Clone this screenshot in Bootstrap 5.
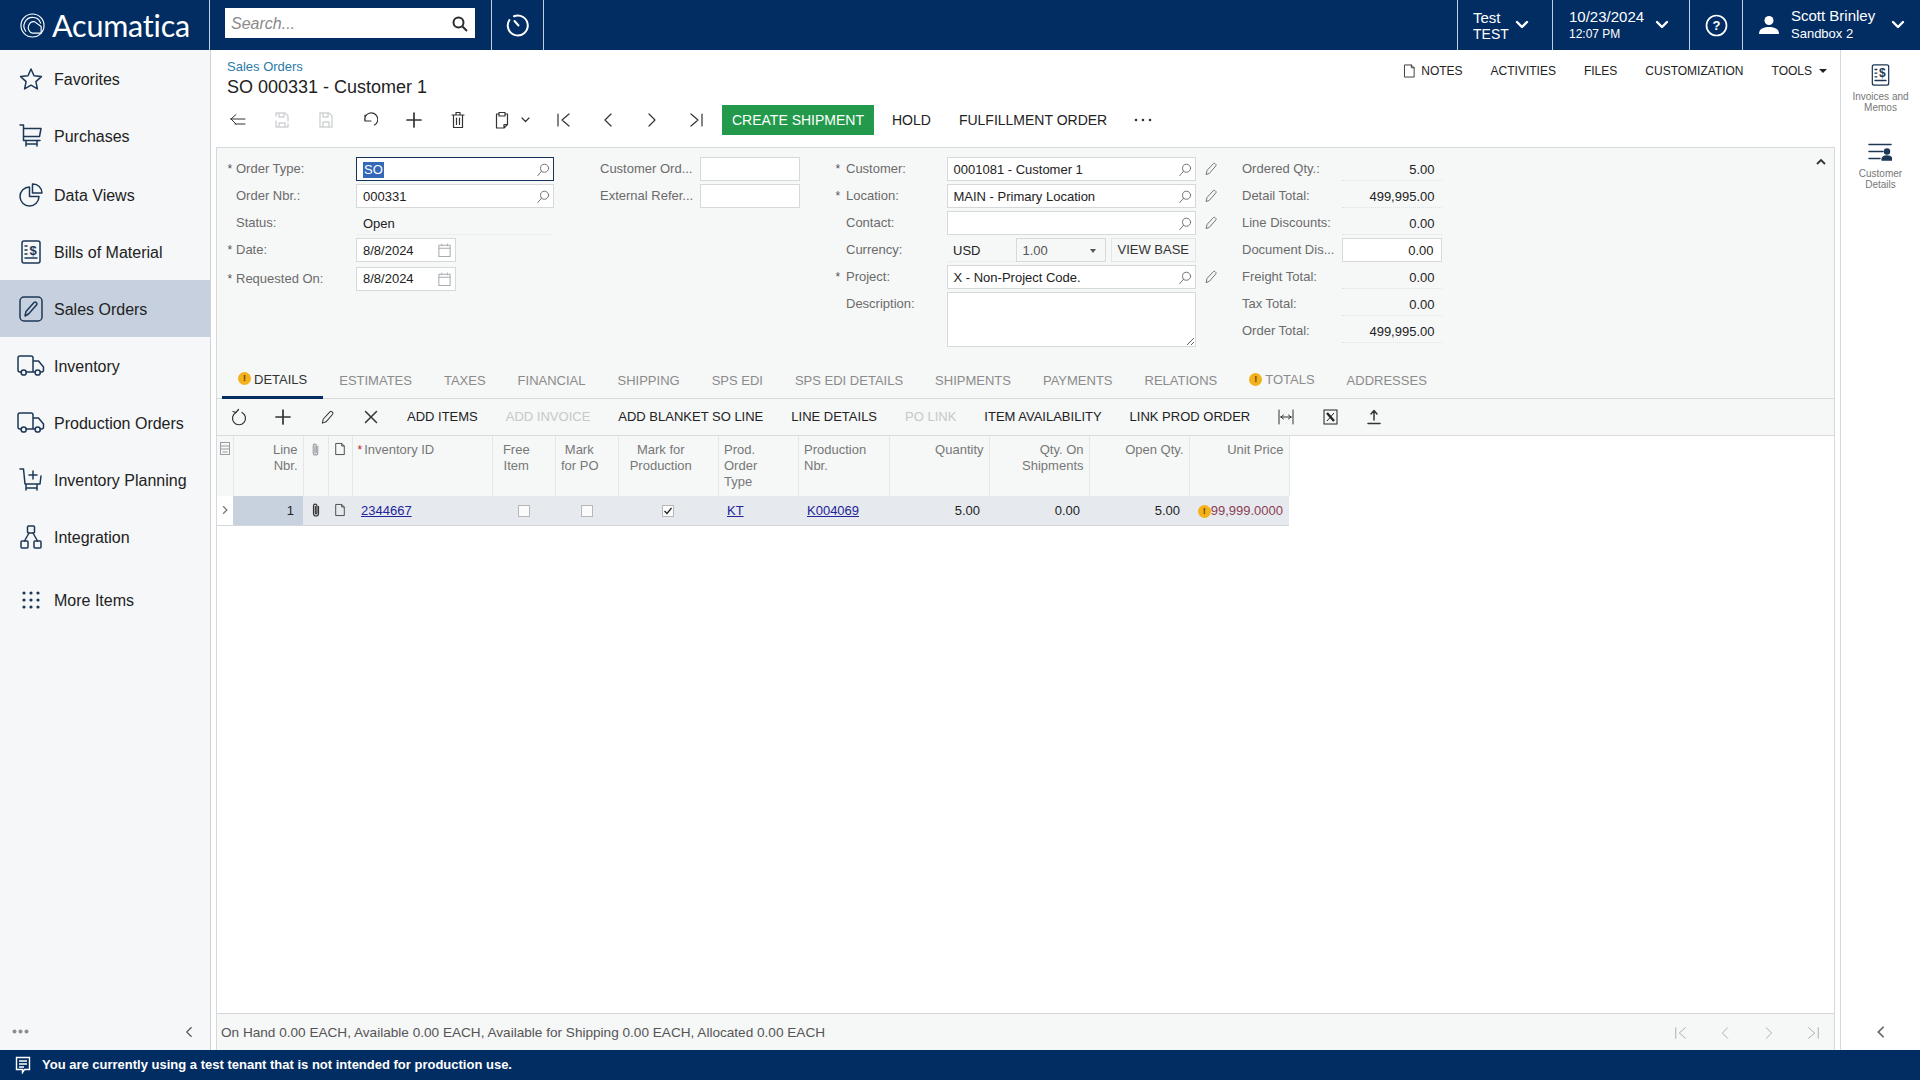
<!DOCTYPE html>
<html lang="en">
<head>
<meta charset="utf-8">
<title>Acumatica - Sales Orders</title>
<link href="https://cdn.jsdelivr.net/npm/bootstrap@5.3.0/dist/css/bootstrap.min.css" rel="stylesheet">
<style>
:root{--navy:#022d63;--ink:#1d3856;--line:#d6d9dc;--pane:#f6f7f7;}
html,body{height:100%;}
body{font-family:"Liberation Sans",Arial,sans-serif;font-size:13px;color:#222;overflow:hidden;background:#fff;display:flex;flex-direction:column;height:1080px;}
svg{display:block;flex:none;}
.ico{fill:none;stroke:var(--ink);stroke-width:1.5;stroke-linecap:round;stroke-linejoin:round;}
.ico-w{fill:none;stroke:#fff;stroke-width:2;stroke-linecap:round;stroke-linejoin:round;}
.ico-g{fill:none;stroke:#6f6f6f;stroke-width:1.1;stroke-linecap:round;stroke-linejoin:round;}
.ico-l{fill:none;stroke:#a8acb0;stroke-width:1.1;stroke-linecap:round;stroke-linejoin:round;}
.ico-d{fill:none;stroke:#333;stroke-width:1.2;stroke-linecap:round;stroke-linejoin:round;}
.ico-x{fill:none;stroke:#cfd2d4;stroke-width:1.4;stroke-linecap:round;stroke-linejoin:round;}
/* top bar */
.topbar{height:50px;background:var(--navy);color:#fff;flex:none;}
.tb-sec{height:50px;display:flex;align-items:center;border-left:1px solid #c3cedd;}
.tb-logo{width:210px;padding-left:20px;gap:7px;border-left:0;border-right:1px solid #c3cedd;}
.logo-text{font-family:Lato,"Liberation Sans",sans-serif;font-size:30.5px;line-height:1;letter-spacing:-.2px;padding-top:1px;}
.tb-search{width:281px;padding-left:15px;border-left:0;}
.search-box{width:250px;height:30px;margin-bottom:4px;background:#fff;display:flex;align-items:center;justify-content:space-between;padding:1px 6px 0;border-radius:0;}
.search-box span{font-size:16px;font-style:italic;color:#8a8a8a;}
.tb-hist{width:53px;justify-content:center;border-right:1px solid #c3cedd;}
.tb-test{width:95px;padding-left:15px;}
.tb-date{width:137px;padding-left:16px;}
.tb-help{width:53px;justify-content:center;}
.tb-user{width:178px;padding-left:16px;}
.tb-two{line-height:1;}
.big14{font-size:14px;}
.big15{font-size:15px;}
.sm12{font-size:12px;}
.sm13{font-size:13px;}
/* shell */
.shell{flex:1 1 auto;min-height:0;display:flex;}
.sidebar{width:211px;flex:none;background:#f5f7f8;border-right:1px solid #cfd3d7;display:flex;flex-direction:column;}
.side-link{height:57px;display:flex;align-items:center;padding:2px 0 0 16px;font-size:16px;color:#222;text-decoration:none;}
.side-link:hover{color:#222;}
.side-link.current{background:#c6d0de;}
.side-ic{width:30px;margin-right:8px;display:flex;justify-content:center;margin-top:-1px;}
.drop2{margin-top:2px;}
.drop6{margin-top:6px;}
.side-foot{height:37px;margin-top:auto;display:flex;align-items:center;justify-content:space-between;padding:0 15px 0 12px;}
.work{flex:1 1 auto;min-width:0;padding-left:5px;display:flex;flex-direction:column;}
.page-head{height:97px;flex:none;padding-left:11px;padding-right:8px;position:relative;}
.head-row{height:50px;display:flex;justify-content:space-between;}
.crumb{color:#2b7aa6;text-decoration:none;line-height:16px;display:block;padding-top:9px;}
.page-title{font-size:18px;line-height:22px;margin:1px 0 0;font-weight:400;color:#222;}
.doc-nav{display:flex;gap:28px;font-size:12px;height:42px;align-items:center;color:#222;}
.doc-nav span{white-space:nowrap;}
.caret-d{display:inline-block;width:0;height:0;border-left:4px solid transparent;border-right:4px solid transparent;border-top:4px solid #222;margin-left:7px;vertical-align:2px;}
.tool-row{display:flex;align-items:center;height:30px;margin:5px 0 0 -11px;}
.tbtn{width:44px;height:30px;display:flex;align-items:center;justify-content:center;padding:0;border:0;background:transparent;border-radius:0;}
.tbtn.wide{width:62px;gap:12px;justify-content:flex-start;padding-left:15px;}
.txtbtn{height:30px;padding:0 14px;border:0;border-radius:0;background:transparent;font-size:13px;color:#222;white-space:nowrap;display:flex;align-items:center;}
.tool-row .txtbtn{font-size:14px;}
.txtbtn.off{color:#c6c8ca;}
.btn.go-green,.btn.go-green:hover{background:#239a4b;color:#fff;width:152px;justify-content:center;padding:0;margin:0 4px;}
/* panel */
.panel{flex:1 1 auto;min-height:0;border:1px solid var(--line);border-bottom:0;display:flex;flex-direction:column;background:#fff;}
.form-area{height:214px;flex:none;background:var(--pane);display:flex;padding:9px 7px 0 12px;}
.fcol{display:grid;grid-auto-rows:24px;row-gap:3px;align-items:center;}
.c1{grid-template-columns:127px 198px;}
.c2{grid-template-columns:100px 100px;margin-left:46px;}
.c3{grid-template-columns:109.5px 249px 46.5px;grid-template-rows:repeat(5,24px) 55px;margin-left:37px;}
.c4{grid-template-columns:100px 99.5px;}
.flab{color:#6b6b6b;white-space:nowrap;overflow:hidden;height:24px;line-height:24px;}
.req{display:inline-block;width:8.5px;margin-left:-1.5px;color:#555;font-size:12px;}
.c3 .req{width:10.5px;}
.c1 .flab,.c3 .flab{overflow:visible;}
.form-control.fld{height:24px;border:1px solid var(--line);border-radius:0;background:#fff;padding:1px 3px 0 6px;font-size:13px;line-height:22px;color:#222;display:flex;align-items:center;justify-content:space-between;box-shadow:none;}
.form-control.fld.focused{border-color:#15325a;border-width:1.5px;}
.sel-text{background:#3469b8;color:#fff;padding:0 1px;line-height:16px;}
.form-control.fld.date-w{width:99.5px;}
.shift2{margin-top:3px;}
.plainv{padding-left:7px;border-bottom:1px solid #eceeef;height:24px;line-height:25px;}
.sumv{text-align:right;padding-right:7px;border-bottom:1px dotted #dfe2e4;height:24px;line-height:25px;}
.form-control.fld.sumin{justify-content:flex-end;padding-right:7px;}
.cur-row{display:flex;height:24px;}
.cur-code{width:69px;padding-left:6.5px;line-height:25px;border-bottom:1px solid #eceeef;}
.form-control.fld.cur-sel{width:90.5px;color:#555;background:var(--pane);flex:none;}
.tri{width:0;height:0;border-left:3.5px solid transparent;border-right:3.5px solid transparent;border-top:4px solid #555;margin-right:6px;}
.btn.viewbase{width:84.5px;height:24px;margin-left:5px;padding:0;border:1px solid #e3e5e6;border-radius:0;background:var(--pane);font-size:13px;color:#333;flex:none;}
textarea.form-control.fld{height:55px;display:block;resize:both;}
.pen{padding-left:8px;}
.fold{margin-left:auto;padding-top:1px;align-self:flex-start;}
/* tabs */
.tab-strip{height:37px;flex:none;background:var(--pane);border-bottom:1px solid #d8dadc;padding-left:5px;flex-wrap:nowrap;}
.tab-strip .nav-link{height:37px;padding:0 16px;margin:0;color:#8b8b8b;font-size:13px;line-height:36px;white-space:nowrap;display:flex;align-items:center;border:0;border-radius:0;}
.tab-strip .nav-link.active{color:#333;border-bottom:3px solid var(--navy);background:transparent;margin-bottom:-1px;height:37px;padding-top:1px;}
.warn-dot{width:13px;height:13px;border-radius:50%;background:#f3b11b;color:#6b3a00;font-size:9px;line-height:13px;text-align:center;font-weight:700;display:inline-block;flex:none;}
.tab-strip .warn-dot{margin-right:3px;margin-top:-3px;}
.up3{position:relative;top:-1px;}
.grid-tools{height:37px;flex:none;background:var(--pane);border-bottom:1px solid #d8dadc;display:flex;align-items:center;}
.grid-tools .tbtn,.grid-tools .txtbtn{height:36px;}
/* grid */
.grid-wrap{flex:1 1 auto;min-height:0;background:#fff;}
.table.sogrid{width:1072px;table-layout:fixed;margin:0;font-size:13px;--bs-table-bg:transparent;}
.sogrid thead th{height:60px;padding:6px 5px 0 5.5px;background:var(--pane);color:#777;font-weight:400;line-height:16px;vertical-align:top;border:0;border-right:1px solid #e4e6e8;}
.sogrid tbody td{height:29px;padding:1px 9px 0;background:#e6eaee;color:#222;border:0;border-bottom:1px solid #d3d7da;vertical-align:middle;}
.sogrid thead th.ctr{text-align:center;padding-right:20px;}
.sogrid th.rgt,.sogrid td.rgt{text-align:right;}
.sogrid tbody td.keycell{background:#c8d2de;}
.sogrid tbody td.ctrd{text-align:center;padding:0;}
.sogrid tbody td.tight{padding:1px 6px 0 2px;}
.sogrid tbody td.icn{padding:0;}
.sogrid thead th.icn{padding:6px 0 0;}
.sogrid a{color:#23239a;}
.star-red{color:#b23;font-size:12px;margin-right:2px;}
.chk{display:inline-block;width:12px;height:12px;border:1px solid #b4b8bb;background:#fbfbfb;vertical-align:-2px;}
.price{color:#8b3d52;}
.grid-foot{height:37px;flex:none;background:var(--pane);border-top:1px solid #d4d7da;display:flex;align-items:center;padding-left:4px;padding-top:2px;color:#555;font-size:13.6px;}
.pager{margin-left:auto;margin-right:-1px;display:flex;}
/* right rail */
.rail{width:80px;flex:none;margin-left:5px;border-left:1px solid var(--line);display:flex;flex-direction:column;align-items:center;background:#fff;}
.rail-item{text-align:center;font-size:10px;line-height:11px;color:#777;padding-top:14px;}
.rail-one{height:79px;}
.rail-one svg{margin:0 auto 5px;}
.rail-two svg{margin:0 auto 7px;}
.rail-foot{margin-top:auto;height:37px;display:flex;align-items:center;}
.statusbar{height:30px;flex:none;background:var(--navy);color:#fff;display:flex;align-items:center;padding-left:15px;font-weight:700;font-size:13px;gap:11px;}
</style>
</head>
<body>
<svg width="0" height="0" style="position:absolute">
  <defs>
    <symbol id="look" viewBox="0 0 16 16"><circle cx="9.800" cy="6" r="4.600"/><path d="M6.400 9.400 2 14.400"/></symbol>
    <symbol id="pen" viewBox="0 0 16 16"><path d="M2.500 14 3.500 9.600 10.800 1.800c.6-.5 1.200-.5 1.800 0l.9.9c.5.6.5 1.200 0 1.800L6.400 12.600z"/></symbol>
    <symbol id="cal" viewBox="0 0 16 16"><rect x="2" y="2.500" width="12" height="12"/><path d="M2 5.500h12M5 1v2M11 1v2"/></symbol>
    <symbol id="bill" viewBox="0 0 20 24"><rect x="1" y="1" width="18" height="22" rx="2"/><path d="M4 6h2M4 10h2M4 14h2M4 18h12"/><text x="12" y="14.500" text-anchor="middle" font-family="Liberation Sans" font-size="13" font-weight="700" fill="#1d3856" stroke="none">$</text></symbol>
    <symbol id="truck" viewBox="0 0 28 22"><path d="M4.500 17H3a2 2 0 0 1-2-2V3a2 2 0 0 1 2-2h11a2 2 0 0 1 2 2v14H9M16 6h5.500l5 6v3a2 2 0 0 1-2 2h-1.500M18 17h-2"/><circle cx="6.700" cy="17.500" r="2.600"/><circle cx="20.700" cy="17.500" r="2.600"/></symbol>
    <symbol id="first" viewBox="0 0 16 16"><path d="M2 2v12M13 2 6 8l7 6"/></symbol>
    <symbol id="prev" viewBox="0 0 16 16"><path d="M11 2 5 8l6 6"/></symbol>
    <symbol id="next" viewBox="0 0 16 16"><path d="M5 2l6 6-6 6"/></symbol>
    <symbol id="last" viewBox="0 0 16 16"><path d="M14 2v12M3 2l7 6-7 6"/></symbol>
    <symbol id="clip" viewBox="0 0 12 16"><path d="M8.500 4v7.500a2.500 2.500 0 0 1-5 0V3.800a1.700 1.700 0 0 1 3.400 0v7.200a.8.8 0 0 1-1.600 0V4"/></symbol>
    <symbol id="note" viewBox="0 0 14 16"><path d="M2 1.500h7l3 3v10H2zM9 1.500v3h3"/></symbol>
  </defs>
</svg>

<header class="topbar d-flex">
  <div class="tb-sec tb-logo">
    <svg width="25" height="25" viewBox="0 0 26 26" class="ico-w" style="stroke-width:1.200"><circle cx="13" cy="13" r="12"/><path d="M6 19A9 9 0 0 1 13 4.500a9 9 0 0 1 8.500 6"/><path d="M9 13a6 6 0 0 1 6-4l7 5v7H13a6 6 0 0 1-4-8z"/></svg>
    <span class="logo-text">Acumatica</span>
  </div>
  <div class="tb-sec tb-search">
    <div class="search-box"><span>Search...</span>
      <svg width="18" height="18" viewBox="0 0 18 18" fill="none" stroke="#2a2a2a" stroke-width="2"><circle cx="7.500" cy="7.500" r="5"/><path d="M11.500 11.500 16 16"/></svg>
    </div>
  </div>
  <div class="tb-sec tb-hist">
    <svg width="24" height="24" viewBox="0 0 24 24" class="ico-w"><path d="M8 3.200A10 10 0 1 1 3.400 7"/><path d="M8.500 8 12.500 12.500"/></svg>
  </div>
  <div class="flex-grow-1"></div>
  <div class="tb-sec tb-test">
    <div class="tb-two" style="width:42px"><div class="big15" style="margin-bottom:2px">Test</div><div class="big14">TEST</div></div>
    <svg width="14" height="10" viewBox="0 0 14 10" class="ico-w" style="stroke-width:2.400"><path d="M2 2l5 5 5-5"/></svg>
  </div>
  <div class="tb-sec tb-date">
    <div class="tb-two" style="width:86px;padding-bottom:2px"><div class="big15" style="margin-bottom:4px">10/23/2024</div><div class="sm12">12:07 PM</div></div>
    <svg width="14" height="10" viewBox="0 0 14 10" class="ico-w" style="stroke-width:2.400"><path d="M2 2l5 5 5-5"/></svg>
  </div>
  <div class="tb-sec tb-help">
    <svg width="23" height="23" viewBox="0 0 23 23" class="ico-w" style="stroke-width:1.700"><circle cx="11.500" cy="11.500" r="10"/><text x="11.500" y="16" text-anchor="middle" font-family="Liberation Sans" font-size="13" font-weight="700" fill="#fff" stroke="none">?</text></svg>
  </div>
  <div class="tb-sec tb-user">
    <svg width="20" height="20" viewBox="0 0 20 20" fill="#fff"><circle cx="10" cy="5.500" r="4.500"/><path d="M0 19c0-5 4-7 10-7s10 2 10 7z"/></svg>
    <div class="tb-two" style="width:100px;margin-left:12px;padding-bottom:3px"><div class="big15" style="margin-bottom:4px">Scott Brinley</div><div class="sm13">Sandbox 2</div></div>
    <svg width="14" height="10" viewBox="0 0 14 10" class="ico-w" style="stroke-width:2.400"><path d="M2 2l5 5 5-5"/></svg>
  </div>
</header>

<div class="shell">
  <nav class="sidebar">
    <a class="side-link" href="#"><span class="side-ic"><svg width="24" height="24" viewBox="0 0 24 24" class="ico"><path d="M12 2l3 6.800 7.400.8-5.500 5 1.500 7.300L12 18.200l-6.400 3.700 1.500-7.300-5.500-5 7.400-.8z"/></svg></span>Favorites</a>
    <a class="side-link" href="#"><span class="side-ic"><svg width="24" height="24" viewBox="0 0 24 24" class="ico"><path d="M1 1h3.500v15.500H21M4.500 4.500H22l-1.500 8H4.500"/><path d="M7 16.500V22M18 16.500V22M7 20h11"/></svg></span>Purchases</a>
    <a class="side-link drop2" href="#"><span class="side-ic"><svg width="24" height="24" viewBox="0 0 24 24" class="ico"><path d="M10.500 4A9.500 9.500 0 1 0 20 13.500H10.500z"/><path d="M13.500 1A9 9 0 0 1 23 10h-9.500z"/></svg></span>Data Views</a>
    <a class="side-link" href="#"><span class="side-ic"><svg width="20" height="24" viewBox="0 0 20 24" class="ico"><use href="#bill"/></svg></span>Bills of Material</a>
    <a class="side-link current" href="#"><span class="side-ic"><svg width="24" height="26" viewBox="0 0 24 26" class="ico"><rect x="1" y="1" width="22" height="24" rx="4"/><path d="M6 20l1-4.500 8-9c.8-.7 1.500-.7 2.200 0l.3.300c.7.700.7 1.400 0 2.200l-8 9z"/></svg></span>Sales Orders</a>
    <a class="side-link" href="#"><span class="side-ic"><svg width="28" height="22" viewBox="0 0 28 22" class="ico"><use href="#truck"/></svg></span>Inventory</a>
    <a class="side-link" href="#"><span class="side-ic"><svg width="28" height="22" viewBox="0 0 28 22" class="ico"><use href="#truck"/></svg></span>Production Orders</a>
    <a class="side-link" href="#"><span class="side-ic"><svg width="24" height="24" viewBox="0 0 24 24" class="ico"><path d="M1 1h3.500l1.500 15H21l1-8M7 16v6M18 16v6M7 20h11M14 3v8M10 7h8"/></svg></span>Inventory Planning</a>
    <a class="side-link" href="#"><span class="side-ic"><svg width="24" height="24" viewBox="0 0 24 24" class="ico"><rect x="8.500" y="1" width="7" height="7" rx="1"/><rect x="2" y="16" width="7" height="7" rx="1"/><rect x="15" y="16" width="7" height="7" rx="1"/><path d="M10 8l-4.500 8M14 8l4.500 8"/></svg></span>Integration</a>
    <a class="side-link drop6" href="#"><span class="side-ic"><svg width="20" height="20" viewBox="0 0 20 20" fill="#1d3856"><circle cx="3" cy="3" r="1.600"/><circle cx="10" cy="3" r="1.600"/><circle cx="17" cy="3" r="1.600"/><circle cx="3" cy="10" r="1.600"/><circle cx="10" cy="10" r="1.600"/><circle cx="17" cy="10" r="1.600"/><circle cx="3" cy="17" r="1.600"/><circle cx="10" cy="17" r="1.600"/><circle cx="17" cy="17" r="1.600"/></svg></span>More Items</a>
    <div class="side-foot">
      <svg width="17" height="5" viewBox="0 0 17 5" fill="#8a8f94"><circle cx="2.500" cy="2.500" r="2"/><circle cx="8.500" cy="2.500" r="2"/><circle cx="14.500" cy="2.500" r="2"/></svg>
      <svg width="12" height="16" viewBox="0 0 16 16" class="ico-d" style="stroke:#555;stroke-width:1.500"><use href="#prev"/></svg>
    </div>
  </nav>

  <main class="work">
    <div class="page-head">
      <div class="head-row">
        <div>
          <a class="crumb" href="#">Sales Orders</a>
          <h1 class="page-title">SO 000331 - Customer 1</h1>
        </div>
        <div class="doc-nav">
          <span class="d-flex align-items-center" style="gap:5px"><svg width="13" height="16" viewBox="0 0 14 16" class="ico-d" style="stroke-width:1"><use href="#note"/></svg>NOTES</span>
          <span>ACTIVITIES</span><span>FILES</span><span>CUSTOMIZATION</span>
          <span>TOOLS<i class="caret-d"></i></span>
        </div>
      </div>
      <div class="tool-row">
        <button class="tbtn" aria-label="Back"><svg width="16" height="16" viewBox="0 0 16 16" class="ico-d"><path d="M1 7h14M1 7l5-4.500M1 7l5 5M5 12h10" style="stroke-width:1"/></svg></button>
        <button class="tbtn" aria-label="Save and close"><svg width="16" height="18" viewBox="0 0 16 18" class="ico-x"><path d="M2 5V2h9l3 3v5M2 10v6h12v-3M5 2v4h5V2M5 16v-4h6v4"/></svg></button>
        <button class="tbtn" aria-label="Save"><svg width="16" height="18" viewBox="0 0 16 18" class="ico-x"><path d="M2 2h9l3 3v11H2zM5 2v4h5V2M5 16v-5h6v5"/></svg></button>
        <button class="tbtn" aria-label="Undo"><svg width="16" height="16" viewBox="0 0 16 16" class="ico-d"><path d="M3 3v6h6M3 9a6.500 6.500 0 1 1 9.500 4"/></svg></button>
        <button class="tbtn" aria-label="Add"><svg width="16" height="16" viewBox="0 0 16 16" class="ico-d" style="stroke-width:1.700"><path d="M8 1v14M1 8h14"/></svg></button>
        <button class="tbtn" aria-label="Delete"><svg width="14" height="18" viewBox="0 0 14 18" class="ico-d"><path d="M1 4h12M5 4V1.500h4V4M2.500 4v12.500h9V4M5.500 7v6.500M8.500 7v6.500"/></svg></button>
        <button class="tbtn wide" aria-label="Paste"><svg width="14" height="18" viewBox="0 0 14 18" class="ico-d"><path d="M4 3H1.500v14H9l3.500-3.500V3H10M4 1.500h6V5H4zM9 17v-3.500h3.500"/></svg><svg width="9" height="6" viewBox="0 0 9 6" class="ico-d"><path d="M1 1l3.500 3.500L8 1"/></svg></button>
        <button class="tbtn" aria-label="First"><svg width="16" height="16" class="ico-d"><use href="#first"/></svg></button>
        <button class="tbtn" aria-label="Previous"><svg width="16" height="16" class="ico-d"><use href="#prev"/></svg></button>
        <button class="tbtn" aria-label="Next"><svg width="16" height="16" class="ico-d"><use href="#next"/></svg></button>
        <button class="tbtn" aria-label="Last"><svg width="16" height="16" class="ico-d"><use href="#last"/></svg></button>
        <button class="btn txtbtn go-green">CREATE SHIPMENT</button>
        <button class="btn txtbtn">HOLD</button>
        <button class="btn txtbtn">FULFILLMENT ORDER</button>
        <button class="tbtn" aria-label="More"><svg width="18" height="4" viewBox="0 0 18 4" fill="#333"><circle cx="2" cy="2" r="1.300"/><circle cx="9" cy="2" r="1.300"/><circle cx="16" cy="2" r="1.300"/></svg></button>
      </div>
    </div>

    <section class="panel">
      <div class="form-area">
        <div class="fcol c1">
          <div class="flab"><span class="req">*</span>Order Type:</div>
          <div class="form-control fld focused"><span class="sel-text">SO</span><svg width="14" height="14" class="ico-g"><use href="#look"/></svg></div>
          <div class="flab"><span class="req"></span>Order Nbr.:</div>
          <div class="form-control fld"><span>000331</span><svg width="14" height="14" class="ico-g"><use href="#look"/></svg></div>
          <div class="flab"><span class="req"></span>Status:</div>
          <div class="plainv">Open</div>
          <div class="flab"><span class="req">*</span>Date:</div>
          <div class="form-control fld date-w"><span>8/8/2024</span><svg width="15" height="15" class="ico-l"><use href="#cal"/></svg></div>
          <div class="flab shift2"><span class="req">*</span>Requested On:</div>
          <div class="form-control fld date-w shift2"><span>8/8/2024</span><svg width="15" height="15" class="ico-l"><use href="#cal"/></svg></div>
        </div>
        <div class="fcol c2">
          <div class="flab">Customer Ord...</div><div class="form-control fld"></div>
          <div class="flab">External Refer...</div><div class="form-control fld"></div>
        </div>
        <div class="fcol c3">
          <div class="flab"><span class="req">*</span>Customer:</div>
          <div class="form-control fld"><span>0001081 - Customer 1</span><svg width="14" height="14" class="ico-g"><use href="#look"/></svg></div>
          <div class="pen"><svg width="14" height="14" class="ico-g"><use href="#pen"/></svg></div>
          <div class="flab"><span class="req">*</span>Location:</div>
          <div class="form-control fld"><span>MAIN - Primary Location</span><svg width="14" height="14" class="ico-g"><use href="#look"/></svg></div>
          <div class="pen"><svg width="14" height="14" class="ico-g"><use href="#pen"/></svg></div>
          <div class="flab"><span class="req"></span>Contact:</div>
          <div class="form-control fld"><span></span><svg width="14" height="14" class="ico-g"><use href="#look"/></svg></div>
          <div class="pen"><svg width="14" height="14" class="ico-g"><use href="#pen"/></svg></div>
          <div class="flab"><span class="req"></span>Currency:</div>
          <div class="cur-row"><div class="cur-code">USD</div><div class="form-control fld cur-sel"><span>1.00</span><i class="tri"></i></div><button class="btn viewbase">VIEW BASE</button></div>
          <div></div>
          <div class="flab"><span class="req">*</span>Project:</div>
          <div class="form-control fld"><span>X - Non-Project Code.</span><svg width="14" height="14" class="ico-g"><use href="#look"/></svg></div>
          <div class="pen"><svg width="14" height="14" class="ico-g"><use href="#pen"/></svg></div>
          <div class="flab align-self-start"><span class="req"></span>Description:</div>
          <textarea class="form-control fld" aria-label="Description"></textarea>
          <div></div>
        </div>
        <div class="fcol c4">
          <div class="flab">Ordered Qty.:</div><div class="sumv">5.00</div>
          <div class="flab">Detail Total:</div><div class="sumv">499,995.00</div>
          <div class="flab">Line Discounts:</div><div class="sumv">0.00</div>
          <div class="flab">Document Dis...</div><div class="form-control fld sumin">0.00</div>
          <div class="flab">Freight Total:</div><div class="sumv">0.00</div>
          <div class="flab">Tax Total:</div><div class="sumv">0.00</div>
          <div class="flab">Order Total:</div><div class="sumv">499,995.00</div>
        </div>
        <div class="fold"><svg width="12" height="8" viewBox="0 0 12 8" fill="none" stroke="#333" stroke-width="1.800"><path d="M2 6l4-4 4 4"/></svg></div>
      </div>

      <ul class="nav tab-strip">
        <li class="nav-item"><a class="nav-link active" href="#"><i class="warn-dot fst-normal">!</i><span>DETAILS</span></a></li>
        <li class="nav-item"><a class="nav-link" href="#">ESTIMATES</a></li>
        <li class="nav-item"><a class="nav-link" href="#">TAXES</a></li>
        <li class="nav-item"><a class="nav-link" href="#">FINANCIAL</a></li>
        <li class="nav-item"><a class="nav-link" href="#">SHIPPING</a></li>
        <li class="nav-item"><a class="nav-link" href="#">SPS EDI</a></li>
        <li class="nav-item"><a class="nav-link" href="#">SPS EDI DETAILS</a></li>
        <li class="nav-item"><a class="nav-link" href="#">SHIPMENTS</a></li>
        <li class="nav-item"><a class="nav-link" href="#">PAYMENTS</a></li>
        <li class="nav-item"><a class="nav-link" href="#">RELATIONS</a></li>
        <li class="nav-item"><a class="nav-link" href="#"><i class="warn-dot fst-normal">!</i><span class="up3">TOTALS</span></a></li>
        <li class="nav-item"><a class="nav-link" href="#">ADDRESSES</a></li>
      </ul>

      <div class="grid-tools">
        <button class="tbtn" aria-label="Refresh"><svg width="16" height="18" viewBox="0 0 16 18" class="ico-d"><path d="M5 4.500a6.500 6.500 0 1 0 6 0M7.500 1.500 5 4.500l-3-1"/></svg></button>
        <button class="tbtn" aria-label="Add row"><svg width="16" height="16" viewBox="0 0 16 16" class="ico-d" style="stroke-width:1.700"><path d="M8 1v14M1 8h14"/></svg></button>
        <button class="tbtn" aria-label="Edit"><svg width="15" height="15" class="ico-d" viewBox="0 0 16 16" style="stroke-width:1.100"><use href="#pen"/></svg></button>
        <button class="tbtn" aria-label="Delete row"><svg width="14" height="14" viewBox="0 0 14 14" class="ico-d" style="stroke-width:1.500"><path d="M1.500 1.500l11 11M12.500 1.500l-11 11"/></svg></button>
        <button class="btn txtbtn">ADD ITEMS</button>
        <button class="btn txtbtn off">ADD INVOICE</button>
        <button class="btn txtbtn">ADD BLANKET SO LINE</button>
        <button class="btn txtbtn">LINE DETAILS</button>
        <button class="btn txtbtn off">PO LINK</button>
        <button class="btn txtbtn">ITEM AVAILABILITY</button>
        <button class="btn txtbtn">LINK PROD ORDER</button>
        <button class="tbtn" aria-label="Fit columns"><svg width="16" height="16" viewBox="0 0 16 16" class="ico-d" style="stroke-width:1"><path d="M1 1v14M15 1v14M3 8h10M3 8l2.500-2M3 8l2.500 2M13 8l-2.500-2M13 8l-2.500 2"/></svg></button>
        <button class="tbtn" aria-label="Export"><svg width="15" height="16" viewBox="0 0 15 16" fill="none" stroke="#222"><rect x="1" y="1" width="13" height="14"/><path d="M4 4l7 8" stroke-width="2.400"/><path d="M11 4l-7 8" stroke-width="1"/></svg></button>
        <button class="tbtn" aria-label="Upload"><svg width="16" height="16" viewBox="0 0 16 16" class="ico-d" style="stroke-width:1.500"><path d="M8 11V2M5 5 8 1.500 11 5M2 14.500h12"/></svg></button>
      </div>

      <div class="grid-wrap">
        <table class="table sogrid">
          <colgroup><col style="width:16px"><col style="width:70px"><col style="width:25px"><col style="width:24px"><col style="width:140px"><col style="width:63px"><col style="width:63px"><col style="width:100px"><col style="width:80px"><col style="width:91px"><col style="width:100px"><col style="width:100px"><col style="width:100px"><col style="width:100px"></colgroup>
          <thead>
            <tr>
              <th class="icn"><svg class="mx-auto" width="10" height="13" viewBox="0 0 10 13" fill="none" stroke="#9a9ea2"><rect x=".5" y=".5" width="9" height="12"/><path d="M.5 4h9M.5 7h9M2.500 10h5"/></svg></th>
              <th class="rgt">Line<br>Nbr.</th>
              <th class="icn"><svg class="mx-auto" width="11" height="15" viewBox="0 0 12 16" fill="none" stroke="#9a9ea2" stroke-width="1.200"><use href="#clip"/></svg></th>
              <th class="icn"><svg class="mx-auto" width="12" height="14" viewBox="0 0 14 16" fill="none" stroke="#333"><use href="#note"/></svg></th>
              <th style="padding-left:5px"><span class="star-red">*</span>Inventory ID</th>
              <th class="ctr text-nowrap">Free<br>Item</th>
              <th class="ctr text-nowrap">Mark<br>for PO</th>
              <th class="ctr text-nowrap">Mark for<br>Production</th>
              <th>Prod.<br>Order<br>Type</th>
              <th>Production<br>Nbr.</th>
              <th class="rgt">Quantity</th>
              <th class="rgt">Qty. On<br>Shipments</th>
              <th class="rgt">Open Qty.</th>
              <th class="rgt">Unit Price</th>
            </tr>
          </thead>
          <tbody>
            <tr>
              <td class="icn" style="background:#fff;"><svg class="mx-auto" width="10" height="12" viewBox="0 0 16 16" fill="none" stroke="#777" stroke-width="2"><use href="#next"/></svg></td>
              <td class="rgt keycell">1</td>
              <td class="icn"><svg class="mx-auto" width="12" height="16" viewBox="0 0 12 16" fill="none" stroke="#333" stroke-width="1.200"><use href="#clip"/></svg></td>
              <td class="icn"><svg class="mx-auto" width="12" height="14" viewBox="0 0 14 16" fill="none" stroke="#333"><use href="#note"/></svg></td>
              <td><a href="#">2344667</a></td>
              <td class="ctrd"><span class="chk"></span></td>
              <td class="ctrd"><span class="chk"></span></td>
              <td class="ctrd"><span class="chk"><svg width="10" height="10" viewBox="0 0 10 10" fill="none" stroke="#222" stroke-width="1.300"><path d="M1.500 5 4 7.500 8.500 2"/></svg></span></td>
              <td><a href="#">KT</a></td>
              <td><a href="#">K004069</a></td>
              <td class="rgt">5.00</td>
              <td class="rgt">0.00</td>
              <td class="rgt">5.00</td>
              <td class="rgt tight"><i class="warn-dot fst-normal" style="margin-right:0;vertical-align:1px">!</i><span class="price">99,999.0000</span></td>
            </tr>
          </tbody>
        </table>
      </div>

      <div class="grid-foot">
        <span>On Hand 0.00 EACH, Available 0.00 EACH, Available for Shipping 0.00 EACH, Allocated 0.00 EACH</span>
        <div class="pager">
          <button class="tbtn" aria-label="First page"><svg width="14" height="14" viewBox="0 0 16 16" class="ico-l"><use href="#first"/></svg></button>
          <button class="tbtn" aria-label="Previous page"><svg width="14" height="14" viewBox="0 0 16 16" class="ico-l"><use href="#prev"/></svg></button>
          <button class="tbtn" aria-label="Next page"><svg width="14" height="14" viewBox="0 0 16 16" class="ico-l"><use href="#next"/></svg></button>
          <button class="tbtn" aria-label="Last page"><svg width="14" height="14" viewBox="0 0 16 16" class="ico-l"><use href="#last"/></svg></button>
        </div>
      </div>
    </section>
  </main>

  <aside class="rail">
    <div class="rail-item rail-one"><svg width="19" height="22" viewBox="0 0 20 24" class="ico"><use href="#bill"/></svg>Invoices and<br>Memos</div>
    <div class="rail-item rail-two"><svg width="24" height="18" viewBox="0 0 24 18" class="ico"><path d="M1 1.500h22M1 8.500h14M1 15.500h11"/><circle cx="19" cy="8.500" r="2.500" fill="#1d3856"/><path d="M14 17c0-3 2-4 5-4s5 1 5 4z" fill="#1d3856"/></svg>Customer<br>Details</div>
    <div class="rail-foot"><svg width="14" height="14" viewBox="0 0 16 16" fill="none" stroke="#666" stroke-width="2"><use href="#prev"/></svg></div>
  </aside>
</div>

<footer class="statusbar">
  <svg width="16" height="18" viewBox="0 0 16 18" fill="none" stroke="#fff" stroke-width="1.400"><path d="M1.500 1.500h13v12h-5l-2 3v-3h-6zM4 5h8M4 8h8M4 11h5"/></svg>
  <span>You are currently using a test tenant that is not intended for production use.</span>
</footer>
</body>
</html>
